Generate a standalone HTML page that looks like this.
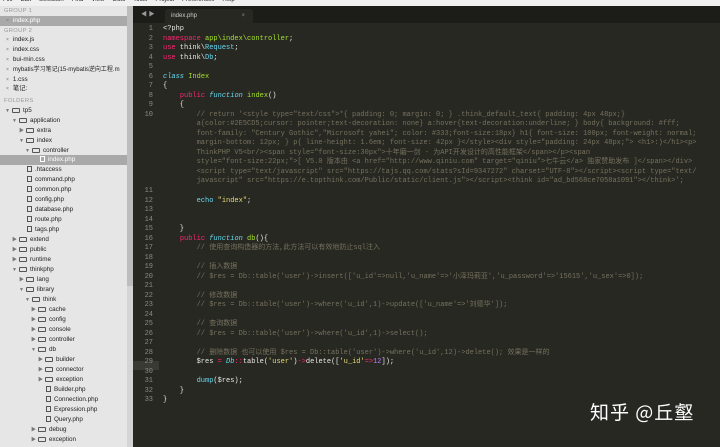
<!DOCTYPE html>
<html><head><meta charset="utf-8"><style>
*{margin:0;padding:0;box-sizing:border-box}
body{width:720px;height:447px;overflow:hidden;background:#272822;position:relative;font-family:"Liberation Sans","Noto Sans CJK SC",sans-serif}
#menu{position:absolute;left:0;top:0;width:720px;height:6px;background:#f0f0f0;font-size:6px;line-height:5px;color:#222;white-space:nowrap;overflow:hidden}
#menu span{margin:0 5px 0 3px;position:relative;top:-2px}
#side{position:absolute;left:0;top:6px;width:127px;height:441px;background:#e6e6e6;font-size:6.3px;color:#222}
#sb{position:absolute;left:127px;top:6px;width:6px;height:441px;background:#d4d4d4}
#sb2{position:absolute;left:127px;top:6px;width:6px;height:280px;background:#bdbdbd}
.r{position:absolute;height:10px;line-height:10px;white-space:nowrap}
.h{color:#999;font-size:5.8px;letter-spacing:.3px}
.sel{background:#a9a9a9;color:#fff;left:0;width:127px}
.x{color:#777;font-size:5px;margin-right:4px}
.ar{display:inline-block;width:7px;color:#777;font-size:5px}
.fd{display:inline-block;width:8px;height:5px;border:1px solid #555;border-radius:1px;margin-right:3px;vertical-align:-0.5px}
.fl{display:inline-block;width:5px;height:6px;border:1px solid #555;margin-right:3px;vertical-align:-0.5px}
#tabs{position:absolute;left:133px;top:6px;width:587px;height:17px;background:#1c1c19}
#tab{position:absolute;left:32px;top:3px;width:88px;height:14px;background:#272822;border-radius:3px 3px 0 0;color:#ccc;font-size:6px;line-height:14px;padding-left:6px}
#gut{position:absolute;left:133px;top:23px;width:22px;height:424px;background:#272822}
.ln{position:absolute;left:133px;width:20px;text-align:right;color:#8a8a80;font-family:"Liberation Mono",monospace;font-size:7px;line-height:9.5px}
.c{position:absolute;left:163px;white-space:pre;font-family:"Liberation Mono","Noto Sans CJK SC",monospace;font-size:7px;line-height:9.5px;color:#e8e8e2}
.k{color:#f92672}.g{color:#a6e22e}.b{color:#66d9ef;font-style:italic}.cm{color:#75715e}.s{color:#e6db74}.n{color:#ae81ff}.t{color:#66d9ef}
#wm{position:absolute;left:590px;top:398px;color:#fff;font-size:19px;font-family:"Noto Sans CJK SC",sans-serif;letter-spacing:1px}
</style></head><body>
<div id="menu"><span>File</span><span>Edit</span><span>Selection</span><span>Find</span><span>View</span><span>Goto</span><span>Tools</span><span>Project</span><span>Preferences</span><span>Help</span></div>
<div id="side">
<div class="r h" style="left:4px;top:0">GROUP 1</div>
<div class="r sel" style="top:10px;padding-left:6px"><span class="x">×</span>index.php</div>
<div class="r h" style="left:4px;top:20px">GROUP 2</div>
<div class="r" style="left:6px;top:29px"><span class="x">×</span>index.js</div>
<div class="r" style="left:6px;top:39px"><span class="x">×</span>index.css</div>
<div class="r" style="left:6px;top:49px"><span class="x">×</span>bui-min.css</div>
<div class="r" style="left:6px;top:59px;font-size:6px"><span class="x">×</span>mybatis学习笔记(15-mybatis逆向工程.m</div>
<div class="r" style="left:6px;top:69px"><span class="x">×</span>1.css</div>
<div class="r" style="left:6px;top:78px"><span class="x">×</span>笔记:</div>
<div class="r h" style="left:4px;top:90px">FOLDERS</div>
<div class="r" style="left:5px;top:100px"><span class="ar">▼</span><span class="fd"></span>tp5</div>
<div class="r" style="left:12px;top:110px"><span class="ar">▼</span><span class="fd"></span>application</div>
<div class="r" style="left:19px;top:120px"><span class="ar">▶</span><span class="fd"></span>extra</div>
<div class="r" style="left:19px;top:130px"><span class="ar">▼</span><span class="fd"></span>index</div>
<div class="r" style="left:25px;top:140px"><span class="ar">▼</span><span class="fd"></span>controller</div>
<div class="r sel" style="top:149px;padding-left:40px"><span class="fl" style="border-color:#fff"></span>index.php</div>
<div class="r" style="left:27px;top:159px"><span class="fl"></span>.htaccess</div>
<div class="r" style="left:27px;top:169px"><span class="fl"></span>command.php</div>
<div class="r" style="left:27px;top:179px"><span class="fl"></span>common.php</div>
<div class="r" style="left:27px;top:189px"><span class="fl"></span>config.php</div>
<div class="r" style="left:27px;top:199px"><span class="fl"></span>database.php</div>
<div class="r" style="left:27px;top:209px"><span class="fl"></span>route.php</div>
<div class="r" style="left:27px;top:219px"><span class="fl"></span>tags.php</div>
<div class="r" style="left:12px;top:229px"><span class="ar">▶</span><span class="fd"></span>extend</div>
<div class="r" style="left:12px;top:239px"><span class="ar">▶</span><span class="fd"></span>public</div>
<div class="r" style="left:12px;top:249px"><span class="ar">▶</span><span class="fd"></span>runtime</div>
<div class="r" style="left:12px;top:259px"><span class="ar">▼</span><span class="fd"></span>thinkphp</div>
<div class="r" style="left:19px;top:269px"><span class="ar">▶</span><span class="fd"></span>lang</div>
<div class="r" style="left:19px;top:279px"><span class="ar">▼</span><span class="fd"></span>library</div>
<div class="r" style="left:25px;top:289px"><span class="ar">▼</span><span class="fd"></span>think</div>
<div class="r" style="left:31px;top:299px"><span class="ar">▶</span><span class="fd"></span>cache</div>
<div class="r" style="left:31px;top:309px"><span class="ar">▶</span><span class="fd"></span>config</div>
<div class="r" style="left:31px;top:319px"><span class="ar">▶</span><span class="fd"></span>console</div>
<div class="r" style="left:31px;top:329px"><span class="ar">▶</span><span class="fd"></span>controller</div>
<div class="r" style="left:31px;top:339px"><span class="ar">▼</span><span class="fd"></span>db</div>
<div class="r" style="left:38px;top:349px"><span class="ar">▶</span><span class="fd"></span>builder</div>
<div class="r" style="left:38px;top:359px"><span class="ar">▶</span><span class="fd"></span>connector</div>
<div class="r" style="left:38px;top:369px"><span class="ar">▶</span><span class="fd"></span>exception</div>
<div class="r" style="left:46px;top:379px"><span class="fl"></span>Builder.php</div>
<div class="r" style="left:46px;top:389px"><span class="fl"></span>Connection.php</div>
<div class="r" style="left:46px;top:399px"><span class="fl"></span>Expression.php</div>
<div class="r" style="left:46px;top:409px"><span class="fl"></span>Query.php</div>
<div class="r" style="left:31px;top:419px"><span class="ar">▶</span><span class="fd"></span>debug</div>
<div class="r" style="left:31px;top:429px"><span class="ar">▶</span><span class="fd"></span>exception</div>
</div>
<div id="sb"></div><div id="sb2"></div>
<div id="tabs"><span style="position:absolute;left:8px;top:3px;color:#999;font-size:6px">◀ ▶</span><div id="tab">index.php<span style="position:absolute;right:8px;color:#888">×</span></div></div>
<div style="position:absolute;left:133px;top:361px;width:26px;height:9px;background:#3a3a35"></div>
<div class="ln" style="top:25px">1<br>2<br>3<br>4<br>5<br>6<br>7<br>8<br>9<br>10</div>
<div class="ln" style="top:187px">11<br>12<br>13<br>14<br>15<br>16<br>17<br>18<br>19<br>20<br>21<br>22<br>23<br>24<br>25<br>26<br>27<br>28<br>29<br>30<br>31<br>32<br>33</div>
<div class="c" style="top:25px">&lt;?php
<span class="k">namespace</span> <span class="g">app\index\controller</span>;
<span class="k">use</span> think\<span class="t">Request</span>;
<span class="k">use</span> think\<span class="t">Db</span>;

<span class="b">class</span> <span class="g">Index</span>
{
    <span class="k">public</span> <span class="b">function</span> <span class="g">index</span>()
    {
<span class="cm">        // return '&lt;style type="text/css"&gt;*{ padding: 0; margin: 0; } .think_default_text{ padding: 4px 48px;}
        a{color:#2E5CD5;cursor: pointer;text-decoration: none} a:hover{text-decoration:underline; } body{ background: #fff;
        font-family: "Century Gothic","Microsoft yahei"; color: #333;font-size:18px} h1{ font-size: 100px; font-weight: normal;
        margin-bottom: 12px; } p{ line-height: 1.6em; font-size: 42px }&lt;/style&gt;&lt;div style="padding: 24px 48px;"&gt; &lt;h1&gt;:)&lt;/h1&gt;&lt;p&gt;
        ThinkPHP V5&lt;br/&gt;&lt;span style="font-size:30px"&gt;十年磨一剑 - 为API开发设计的高性能框架&lt;/span&gt;&lt;/p&gt;&lt;span
        style="font-size:22px;"&gt;[ V5.0 版本由 &lt;a href="http://www.qiniu.com" target="qiniu"&gt;七牛云&lt;/a&gt; 独家赞助发布 ]&lt;/span&gt;&lt;/div&gt;
        &lt;script type="text/javascript" src="https://tajs.qq.com/stats?sId=9347272" charset="UTF-8"&gt;&lt;/script&gt;&lt;script type="text/
        javascript" src="https://e.topthink.com/Public/static/client.js"&gt;&lt;/script&gt;&lt;think id="ad_bd568ce7058a1091"&gt;&lt;/think&gt;';</span></div>
<div class="c" style="top:187px">
        <span class="t">echo</span> <span class="s">"index"</span>;


    }
    <span class="k">public</span> <span class="b">function</span> <span class="g">db</span>(){
<span class="cm">        // 使用查询构造器的方法,此方法可以有效地防止sql注入

        // 插入数据
        // $res = Db::table('user')-&gt;insert(['u_id'=&gt;null,'u_name'=&gt;'小泽玛莉亚','u_password'=&gt;'15615','u_sex'=&gt;0]);

        // 修改数据
        // $res = Db::table('user')-&gt;where('u_id',1)-&gt;update(['u_name'=&gt;'刘德华']);

        // 查询数据
        // $res = Db::table('user')-&gt;where('u_id',1)-&gt;select();

        // 删除数据 也可以使用 $res = Db::table('user')-&gt;where('u_id',12)-&gt;delete(); 效果是一样的</span>
        $res <span class="k">=</span> <span class="b">Db</span><span class="k">::</span>table(<span class="s">'user'</span>)<span class="k">-&gt;</span>delete([<span class="s">'u_id'</span><span class="k">=&gt;</span><span class="n">12</span>]);

        <span class="t">dump</span>($res);
    }
}</div>
<div id="wm">知乎 @丘壑</div>
</body></html>
